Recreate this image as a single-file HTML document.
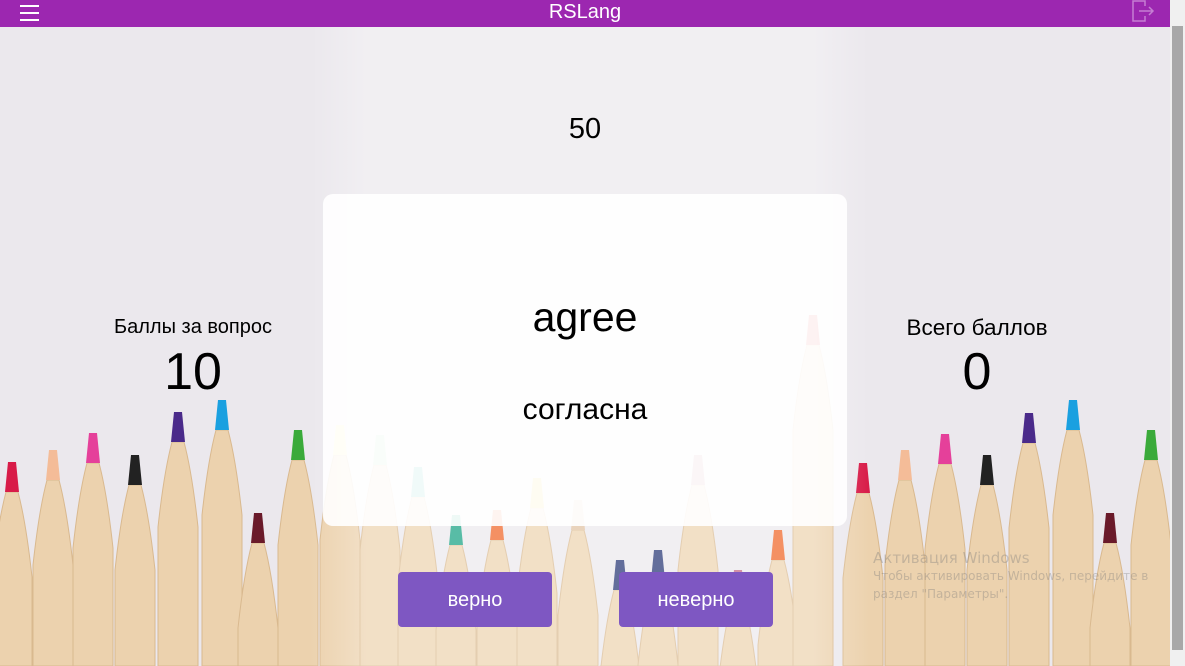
<!DOCTYPE html>
<html><head><meta charset="utf-8"><style>
*{margin:0;padding:0;box-sizing:border-box}
body{width:1185px;height:666px;overflow:hidden;position:relative;background:#ebe8ed;font-family:"Liberation Sans",sans-serif;color:#000}
#bg{position:absolute;left:0;top:0}
.hdr{position:absolute;left:0;top:0;width:1170px;height:27px;background:#9c27b0;color:#fff;text-align:center;font-size:20px;line-height:25px}
.burger{position:absolute;left:20px;top:5px;width:19px}
.burger i{display:block;height:2px;background:#fff;margin-bottom:5px}
.sb{position:absolute;left:1170px;top:0;width:15px;height:666px;background:#f0f0f0}
.sb .th{position:absolute;left:2px;top:26px;width:11px;height:624px;background:#a8a8a8}
.t{position:absolute;text-align:center}
.card{position:absolute;left:323px;top:194px;width:524px;height:332px;background:rgba(255,255,255,.9);border-radius:10px}
.btn{position:absolute;top:572px;width:154px;height:55px;background:#7e57c2;color:#fff;border-radius:4px;font-size:20px;text-align:center;line-height:56px}
.win{position:absolute;left:873px;top:549px;color:rgba(120,120,120,.35);font-family:"DejaVu Sans",sans-serif}
</style></head><body>
<svg id="bg" width="1170" height="666"></svg>
<div class="hdr">RSLang
<div class="burger"><i></i><i></i><i></i></div>
<svg style="position:absolute;left:1131px;top:0" width="24" height="22" viewBox="0 0 24 22" fill="none" stroke="#c57fd3" stroke-width="1.5"><path d="M14 6V1H2v20h12v-5"/><path d="M8 11h14M18 7l4 4-4 4"/></svg>
</div>
<div class="sb"><div class="th"></div></div>
<div class="t" style="left:485px;width:200px;top:113px;font-size:29px">50</div>
<div class="t" style="left:93px;width:200px;top:316px;font-size:20px">Баллы за вопрос</div>
<div class="t" style="left:93px;width:200px;top:342px;font-size:52px">10</div>
<div class="t" style="left:857px;width:240px;top:315px;font-size:22.5px">Всего баллов</div>
<div class="t" style="left:877px;width:200px;top:342px;font-size:52px">0</div>
<div class="card"></div>
<div class="t" style="left:385px;width:400px;top:294px;font-size:41px">agree</div>
<div class="t" style="left:385px;width:400px;top:393px;font-size:30px">согласна</div>
<div class="btn" style="left:398px">верно</div>
<div class="btn" style="left:619px">неверно</div>
<div class="win"><div style="font-size:15px">Активация Windows</div><div style="font-size:12px;line-height:18px">Чтобы активировать Windows, перейдите в<br>раздел "Параметры".</div></div>
<script>
var P=[[12,462,'#d81b48'],[53,450,'#f4bc98'],[93,433,'#e5409a'],[135,455,'#222'],[178,412,'#4a2a8a'],[222,400,'#1aa0e0'],[258,513,'#6a1a2a'],[298,430,'#3aaa3a'],[340,425,'#fff0a0'],[380,435,'#a8e0b0'],[418,467,'#20b0a0'],[456,515,'#10a080'],[497,510,'#f06020'],[537,478,'#f0d040'],[578,500,'#e0c0a0'],[620,560,'#203070'],[658,550,'#203070'],[698,455,'#c08090'],[738,570,'#c06080'],[778,530,'#f06020'],[813,315,'#e04040'],[863,463,'#d81b48'],[905,450,'#f4bc98'],[945,434,'#e5409a'],[987,455,'#222'],[1029,413,'#4a2a8a'],[1073,400,'#1aa0e0'],[1110,513,'#6a1a2a'],[1151,430,'#3aaa3a']];
var s='<defs><linearGradient id="g" x1="0" x2="1"><stop offset="0" stop-color="#fff" stop-opacity="0"/><stop offset=".1" stop-color="#fff" stop-opacity=".3"/><stop offset=".9" stop-color="#fff" stop-opacity=".3"/><stop offset="1" stop-color="#fff" stop-opacity="0"/></linearGradient></defs>';
P.forEach(function(p){var x=p[0],y=p[1];
s+='<path d="M'+(x-20)+' 666V'+(y+115)+'Q'+(x-14)+' '+(y+60)+' '+(x-6)+' '+(y+30)+'H'+(x+6)+'Q'+(x+14)+' '+(y+60)+' '+(x+20)+' '+(y+115)+'V666Z" fill="#ecd2ae" stroke="#d9b98f" stroke-width="1"/>';
s+='<path d="M'+(x-4)+' '+y+'H'+(x+4)+'L'+(x+7)+' '+(y+30)+'H'+(x-7)+'Z" fill="'+p[2]+'"/>';});
s+='<rect x="310" y="27" width="560" height="640" fill="url(#g)"/>';
document.getElementById('bg').innerHTML=s;
</script>
</body></html>
